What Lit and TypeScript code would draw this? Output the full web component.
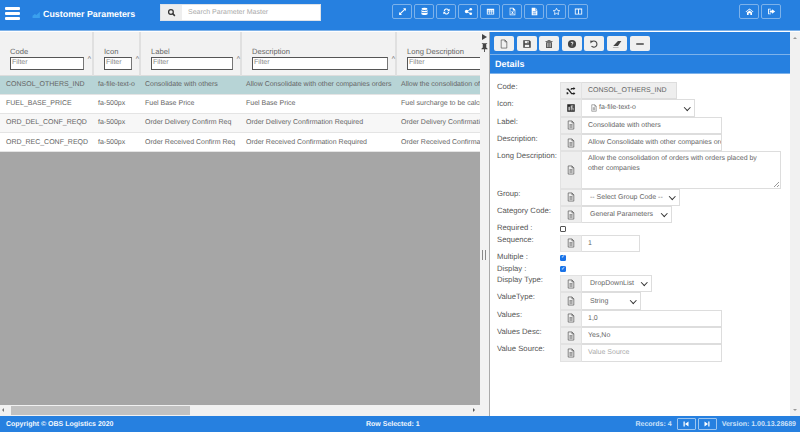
import { LitElement, css, html, svg } from 'lit';
import { customElement } from 'lit/decorators.js';

// rough font-awesome style glyphs, all on a 16x16 box
const icons: Record<string, unknown> = {
  search: svg`<circle cx="7" cy="7" r="4.2" fill="none" stroke="currentColor" stroke-width="2.2"/><path d="M10 10l4 4" stroke="currentColor" stroke-width="2.6"/>`,
  expand: svg`<path d="M9 2h5v5l-1.8-1.8L5.2 12.2 7 14H2V9l1.8 1.8 7-7z"/>`,
  db: svg`<ellipse cx="8" cy="3.5" rx="5.5" ry="2"/><path d="M2.5 5.5c1 2 10 2 11 0v2.4c-1 2-10 2-11 0zM2.5 9.3c1 2 10 2 11 0v3.2c-1 2.4-10 2.4-11 0z"/>`,
  refresh: svg`<path d="M3 7a5.2 5.2 0 0 1 9-2.6L13.6 3v4.6H9l1.7-1.7A3.2 3.2 0 0 0 5 7zM13 9a5.2 5.2 0 0 1-9 2.6L2.4 13V8.4H7l-1.7 1.7A3.2 3.2 0 0 0 11 9z"/>`,
  share: svg`<circle cx="4.5" cy="8" r="3"/><circle cx="12" cy="4" r="2.4"/><circle cx="12" cy="12" r="2.4"/><path d="M4.5 8l7.5-4M4.5 8l7.5 4" stroke="currentColor" stroke-width="1.4"/>`,
  table: svg`<path fill-rule="evenodd" d="M1.5 3h13v10.500h-13zM3 6v1.500h3V6zM7 6v1.500h2V6zM10 6v1.500h3V6zM3 8.500V10h3V8.500zM7 8.500V10h2V8.500zM10 8.500V10h3V8.500zM3 11v1.300h3V11zM7 11v1.300h2V11zM10 11v1.300h3V11z"/>`,
  excel: svg`<path fill-rule="evenodd" d="M3 1.500h6.500L13 5v9.500H3zM4.200 2.700v10.600h7.600V6H8.500V2.700z"/><path d="M5.700 7.500h1.500L8 9l.8-1.500h1.500L8.800 10l1.500 2.500H8.800L8 11l-.8 1.500H5.700L7.200 10z"/>`,
  pdf: svg`<path d="M3 1.500h6.500V6H13v8.500H3zM10.300 1.800L12.800 5h-2.500z"/><path d="M5 8h6v1H5zM5 10h6v1H5zM5 12h6v1H5z" fill="#2a7fe0"/>`,
  star: svg`<path fill="none" stroke="currentColor" stroke-width="1.400" d="M8 2.200l1.800 3.700 4 .6-2.900 2.800.7 4L8 11.400l-3.600 1.900.7-4-2.900-2.800 4-.6z"/>`,
  columns: svg`<path fill-rule="evenodd" d="M1.500 2.500h13v11h-13zM3 4.500v7.500h4.200V4.500zM8.800 4.500v7.500H13V4.500z"/>`,
  home: svg`<path d="M8 2.500L15 8.500l-1 1L8 4.500 2 9.500l-1-1zM3.500 9.800L8 6l4.500 3.800V14H9.500v-3h-3v3h-3z"/>`,
  signout: svg`<path d="M2 3h5v1.600H3.600v6.800H7V13H2z"/><path d="M9 4l5.500 4L9 12V9.800H5V6.200h4z"/>`,
  newFile: svg`<path fill="none" stroke="currentColor" d="M3.500 1.500h6l3 3v10h-9zM9.500 1.500v3h3"/>`,
  save: svg`<path fill-rule="evenodd" d="M2 2h10l2 2v10H2zM4.500 3.300v3.500h6.500V3.300zM4.500 9v3.800h7V9zM8.800 3.800h1.400v2.400H8.800z"/>`,
  trash: svg`<path fill-rule="evenodd" d="M6 1.800h4l.6 1.200h3v1.500H2.400V3h3zM3.400 5.200h9.200v9.300H3.400z"/><path d="M5.500 6.500h1v6.500h-1zM7.500 6.500h1v6.500h-1zM9.500 6.500h1v6.500h-1z" fill="#eee"/>`,
  help: svg`<circle cx="8" cy="8" r="6.500"/><path d="M6 6.300C6 4 10.200 4 10.200 6.300c0 1.500-1.500 1.500-1.500 3H7.300c0-2 1.400-2 1.400-3 0-.8-1.200-.8-1.300 0zM7.300 10.200h1.400v1.500H7.300z" fill="#eee"/>`,
  undo: svg`<path fill="none" stroke="currentColor" stroke-width="1.800" d="M4.200 4.500A5 5 0 1 1 4 11.500"/><path d="M2 2.500l4.500 .5-4 4z"/>`,
  eraser: svg`<path d="M9.500 3H15l-5.500 8H4L2 11z" /><path d="M1.500 13h9v1h-9z" opacity=".5"/>`,
  minus: svg`<path d="M2 6.800h12v2.400H2z"/>`,
  shuffle: svg`<path d="M1 4h3l5.500 7H12V9.500L15 12l-3 2.500V13H8.500L3 6H1zM1 10h2l1.200 1.500L3 13H1zM8.500 3H12V1.500L15 4l-3 2.500V5H9.500L8.300 6.500 7 5z"/>`,
  px500: svg`<path d="M2 2h12v12H2z"/><path d="M4 6h2v6H4zM7.500 4h4.500v1.500H9V7h3v5h-1.500V8.500H9V12H7.500z" fill="#e8e8e8"/>`,
  doc: svg`<path fill="none" stroke="currentColor" stroke-width="1.100" d="M3.500 1.500h6l3 3v10h-9zM9.500 1.500v3h3M5.500 7.500h5M5.500 9.500h5M5.500 11.500h5"/>`,
  first: svg`<path d="M3 3h2.500v10H3zM13 3v10L6 8z"/>`,
  last: svg`<path d="M13 3h-2.500v10H13zM3 3v10l7-5z"/>`,
};

const icon = (name: string, size = 10) =>
  html`<svg class="ic" width=${size} height=${size} viewBox="0 0 16 16" fill="currentColor">${icons[name]}</svg>`;

const columns = [
  { name: 'Code', width: 93 },
  { name: 'Icon', width: 47 },
  { name: 'Label', width: 101 },
  { name: 'Description', width: 155 },
  { name: 'Long Description', width: 180 },
];

const rows = [
  ['CONSOL_OTHERS_IND', 'fa-file-text-o', 'Consolidate with others', 'Allow Consolidate with other companies orders', 'Allow the consolidation of orders with orders placed'],
  ['FUEL_BASE_PRICE', 'fa-500px', 'Fuel Base Price', 'Fuel Base Price', 'Fuel surcharge to be calculated on base price'],
  ['ORD_DEL_CONF_REQD', 'fa-500px', 'Order Delivery Confirm Req', 'Order Delivery Confirmation Required', 'Order Delivery Confirmation Required'],
  ['ORD_REC_CONF_REQD', 'fa-500px', 'Order Received Confirm Req', 'Order Received Confirmation Required', 'Order Received Confirmation Required'],
];

const topIcons = ['expand', 'db', 'refresh', 'share', 'table', 'excel', 'pdf', 'star', 'columns'];
const panelIcons = ['newFile', 'save', 'trash', 'help', 'undo', 'eraser', 'minus'];

@customElement('app-root')
export class AppRoot extends LitElement {
  static styles = css`
    :host {
      display: flex;
      flex-direction: column;
      height: 432px;
      width: 800px;
      overflow: hidden;
      font-family: 'Liberation Sans', Arial, sans-serif;
      font-size: 7px;
      text-rendering: geometricPrecision;
      color: #666;
      background: #fff;
    }
    .ic { display: block; }

    /* top bar */
    .topbar {
      height: 31px;
      flex: none;
      background: #2680e0;
      border-bottom: 1px solid #7db2ea;
      box-sizing: border-box;
      display: flex;
      align-items: flex-start;
      color: #fff;
    }
    .burger { margin: 7px 0 0 5px; width: 15px; display: flex; flex-direction: column; gap: 2.500px; }
    .burger i { display: block; height: 2.500px; background: #fff; border-radius: 1px; }
    .brand { margin: 9px 0 0 12px; display: flex; align-items: center; gap: 2px; font-size: 8.900px; font-weight: 700; width: 128px; }
    .brand svg { color: #3aa0ee; }
    .search { margin-top: 4px; display: flex; width: 161px; height: 17px; border: 1px solid #dfe3e8; box-sizing: border-box; background: #fff; }
    .search .go { width: 21px; background: #eee; color: #333; display: flex; align-items: center; justify-content: center; }
    .search span { padding-left: 6px; line-height: 15px; font-size: 7px; color: #aaa; }
    .tools { margin: 4px 0 0 71px; display: flex; gap: 2px; }
    .tools.end { margin-left: auto; margin-right: 19px; }
    .tbtn { width: 20px; height: 15px; box-sizing: border-box; border: 1px solid #7db2ea; border-radius: 2px; display: flex; align-items: center; justify-content: center; }

    /* main area */
    .main { flex: 1; display: flex; min-height: 0; padding-top: 1px; }
    .left { width: 480px; flex: none; display: flex; flex-direction: column; background: #a6a6a6; }
    .grid { flex: 1; overflow: hidden; min-height: 0; }
    table { border-collapse: collapse; table-layout: fixed; width: 576px; background: #fff; }
    th { height: 43px; box-sizing: border-box; background: #f2f2f2; border-right: 2px solid #e0e0e0; border-bottom: 1px solid #ddd; font-weight: 400; text-align: left; padding: 0; vertical-align: top; }
    .head { position: relative; padding: 15px 0 0 10px; font-size: 7.600px; color: #666; line-height: 10px; }
    .filter { display: block; height: 13px; box-sizing: border-box; border: 1.500px solid #555; border-right-color: #777; background: #fff; padding-left: 1px; font-size: 7px; line-height: 10px; color: #888; }
    .caret { position: absolute; right: -7px; top: 23px; font-size: 7px; color: #555; }
    td { height: 19.200px; box-sizing: border-box; padding: 0 0 0 5px; white-space: nowrap; overflow: hidden; border-bottom: 1px solid #e4e4e4; font-size: 7px; color: #666; }
    td:first-child { padding-left: 6px; }
    tr.sel td { background: #b7d4d6; }
    tr.alt td { background: #f7f7f7; }
    .hbar { height: 11px; flex: none; background: #f1f1f1; display: flex; align-items: center; position: relative; }
    .hbar .thumb { margin-left: 11px; width: 179px; height: 9px; background: #c1c1c1; }
    .arrow { width: 0; height: 0; border: 2.500px solid transparent; }
    .hbar .l { position: absolute; left: 2px; top: 3px; border-right-color: #777; border-left-width: 0; }
    .hbar .r { position: absolute; left: 473px; top: 3px; border-left-color: #555; border-right-width: 0; }

    .split { width: 10px; flex: none; background: #f2f2f2; border-right: 1px solid #aaa; box-sizing: border-box; display: flex; flex-direction: column; align-items: center; color: #444; position: relative; }
    .split .play { margin-top: 2px; border-left: 5px solid #444; border-top: 3px solid transparent; border-bottom: 3px solid transparent; }
    .split .pin { margin-top: 3px; }
    .split .grip { position: absolute; top: 218px; left: 2px; width: 4px; height: 10px; border-left: 1.500px solid #888; border-right: 1.500px solid #888; box-sizing: border-box; }

    .right { flex: 1; display: flex; flex-direction: column; min-width: 0; }
    .rtools { height: 23px; flex: none; background: #2680e0; display: flex; gap: 2.600px; padding: 4px 0 0 4px; box-sizing: border-box; border-bottom: 1px solid #7db2ea; }
    .pbtn { width: 20px; height: 15px; background: #f0f0f0; border-radius: 2px; color: #444; display: flex; align-items: center; justify-content: center; }
    .details { height: 19px; flex: none; background: #2680e0; color: #fff; font-weight: 700; font-size: 9px; line-height: 18px; padding-left: 5px; box-sizing: border-box; border-bottom: 1px solid #7db2ea; }
    .form { flex: 1; display: grid; grid-template-columns: 63px 1fr; padding: 8px 0 0 7px; align-content: start; font-size: 7.700px; }
    .lbl { line-height: 10px; color: #555; height: 17.300px; box-sizing: border-box; white-space: nowrap; }
    .ctl { display: flex; align-items: stretch; height: 17.300px; }
    .ctl.tall { height: 37.500px; }
    .ctl.check { height: 11.500px; align-items: center; }
    .lbl.check { height: 11.500px; }
    .addon { width: 22px; flex: none; background: #eee; border: 1px solid #e2e2e2; box-sizing: border-box; color: #555; display: flex; align-items: center; justify-content: center; }
    .addon.dark { color: #222; }
    .val { box-sizing: border-box; border: 1px solid #ddd; border-left: 0; padding-left: 6px; line-height: 15px; color: #666; white-space: nowrap; overflow: hidden; background: #fff; font-size: 7px; display: flex; align-items: center; }
    .val.ro { background: #eee; }
    .val.ph { color: #aaa; }
    .val.area { display: block; white-space: normal; line-height: 10px; padding: 2px 12px 0 6px; position: relative; }
    .val.area::after { content: ''; position: absolute; right: 1px; bottom: 1px; width: 5px; height: 5px; background: linear-gradient(135deg, transparent 50%, #999 50%, #999 60%, transparent 60%, transparent 75%, #999 75%, #999 85%, transparent 85%); }
    .val.sel { justify-content: space-between; padding-right: 3px; padding-left: 8px; }
    .val.sel span { display: flex; align-items: center; gap: 1px; }
    .chev { width: 3.500px; height: 3.500px; margin: -2px 2px 0 0; border-right: 1.300px solid #333; border-bottom: 1.300px solid #333; transform: rotate(45deg); flex: none; }
    .box { width: 6px; height: 6px; box-sizing: border-box; border: 1px solid #555; border-radius: 1px; background: #fff; }
    .box.on { background: #1a73e8; border-color: #1a73e8; color: #fff; display: flex; align-items: center; justify-content: center; font-size: 5px; line-height: 5px; }

    .vbar { width: 10px; flex: none; background: #f1f1f1; position: relative; }
    .vbar .u { position: absolute; left: 2.500px; top: 5px; border-bottom-color: #999; border-top-width: 0; }
    .vbar .d { position: absolute; left: 2.500px; bottom: 5px; border-top-color: #999; border-bottom-width: 0; }

    /* footer */
    .foot { height: 16px; flex: none; background: #2680e0; color: #f2f7fd; font-weight: 700; font-size: 7px; display: flex; align-items: center; padding: 0 4px 0 6px; position: relative; }
    .foot .mid { position: absolute; left: 366px; }
    .foot .rec { margin-left: auto; margin-right: 3px; color: #cfe2f8; }
    .foot .ver { margin-left: 5px; color: #cfe2f8; }
    .nav { width: 19px; height: 12px; margin-left: 2px; box-sizing: border-box; border: 1px solid #9cc5f0; border-radius: 1px; display: flex; align-items: center; justify-content: center; color: #fff; }
  `;

  private field(label: string, kind: string, value: string, width: number, name = 'doc', dark = false, glyph = '') {
    return html`
      <div class="lbl">${label}</div>
      <div class="ctl ${kind === 'area' ? 'tall' : ''}">
        <div class="addon ${dark ? 'dark' : ''}">${icon(name, 10)}</div>
        <div class="val ${kind}" style="width:${width}px">
          ${kind === 'sel' ? html`<span>${glyph ? icon(glyph, 8) : ''}${value}</span><i class="chev"></i>` : value}
        </div>
      </div>
    `;
  }

  private check(label: string, on: boolean) {
    return html`
      <div class="lbl check">${label}</div>
      <div class="ctl check"><span class="box ${on ? 'on' : ''}">${on ? '✓' : ''}</span></div>
    `;
  }

  render() {
    return html`
      <header class="topbar">
        <div class="burger"><i></i><i></i><i></i></div>
        <div class="brand">
          <svg width="9" height="9" viewBox="0 0 16 14" fill="currentColor"><path d="M1 13V9l4-3 3 2 6-6v11z"/></svg>
          Customer Parameters
        </div>
        <div class="search"><div class="go">${icon('search', 9)}</div><span>Search Parameter Master</span></div>
        <div class="tools">${topIcons.map((n) => html`<div class="tbtn">${icon(n, 9)}</div>`)}</div>
        <div class="tools end">
          <div class="tbtn">${icon('home', 9)}</div>
          <div class="tbtn">${icon('signout', 9)}</div>
        </div>
      </header>

      <div class="main">
        <section class="left">
          <div class="grid">
            <table>
              <colgroup>${columns.map((c) => html`<col style="width:${c.width}px" />`)}</colgroup>
              <thead>
                <tr>
                  ${columns.map((c) => html`
                    <th>
                      <div class="head" style="width:${c.width - 19}px">
                        ${c.name}
                        <span class="filter">Filter</span>
                        <span class="caret">^</span>
                      </div>
                    </th>
                  `)}
                </tr>
              </thead>
              <tbody>
                ${rows.map((r, i) => html`
                  <tr class="${i === 0 ? 'sel' : i === 2 ? 'alt' : ''}">
                    ${r.map((cell) => html`<td>${cell}</td>`)}
                  </tr>
                `)}
              </tbody>
            </table>
          </div>
          <div class="hbar"><i class="arrow l"></i><div class="thumb"></div><i class="arrow r"></i></div>
        </section>

        <div class="split">
          <i class="play"></i>
          <svg class="pin" width="7" height="9" viewBox="0 0 8 10" fill="currentColor"><path d="M1 0h6v1H6v4l1.500 1.500V7H4.500v3h-1V7H.5v-.5L2 5V1H1z"/></svg>
          <i class="grip"></i>
        </div>

        <section class="right">
          <div class="rtools">${panelIcons.map((n) => html`<div class="pbtn">${icon(n, 10)}</div>`)}</div>
          <div class="details">Details</div>
          <div class="form">
            ${this.field('Code:', 'ro', 'CONSOL_OTHERS_IND', 95, 'shuffle', true)}
            ${this.field('Icon:', 'sel', 'fa-file-text-o', 113, 'px500', true, 'doc')}
            ${this.field('Label:', '', 'Consolidate with others', 140)}
            ${this.field('Description:', '', 'Allow Consolidate with other companies orders', 140)}
            ${this.field('Long Description:', 'area', 'Allow the consolidation of orders with orders placed by other companies', 199)}
            ${this.field('Group:', 'sel', '-- Select Group Code --', 98)}
            ${this.field('Category Code:', 'sel', 'General Parameters', 90)}
            ${this.check('Required :', false)}
            ${this.field('Sequence:', '', '1', 58)}
            ${this.check('Multiple :', true)}
            ${this.check('Display :', true)}
            ${this.field('Display Type:', 'sel', 'DropDownList', 70)}
            ${this.field('ValueType:', 'sel', 'String', 59)}
            ${this.field('Values:', '', '1,0', 140)}
            ${this.field('Values Desc:', '', 'Yes,No', 140)}
            ${this.field('Value Source:', 'ph', 'Value Source', 140)}
          </div>
        </section>
        <div class="vbar"><i class="arrow u"></i><i class="arrow d"></i></div>
      </div>

      <footer class="foot">
        <span>Copyright © OBS Logistics 2020</span>
        <span class="mid">Row Selected: 1</span>
        <span class="rec">Records: 4</span>
        <div class="nav">${icon('first', 8)}</div>
        <div class="nav">${icon('last', 8)}</div>
        <span class="ver">Version: 1.00.13.28689</span>
      </footer>
    `;
  }
}
